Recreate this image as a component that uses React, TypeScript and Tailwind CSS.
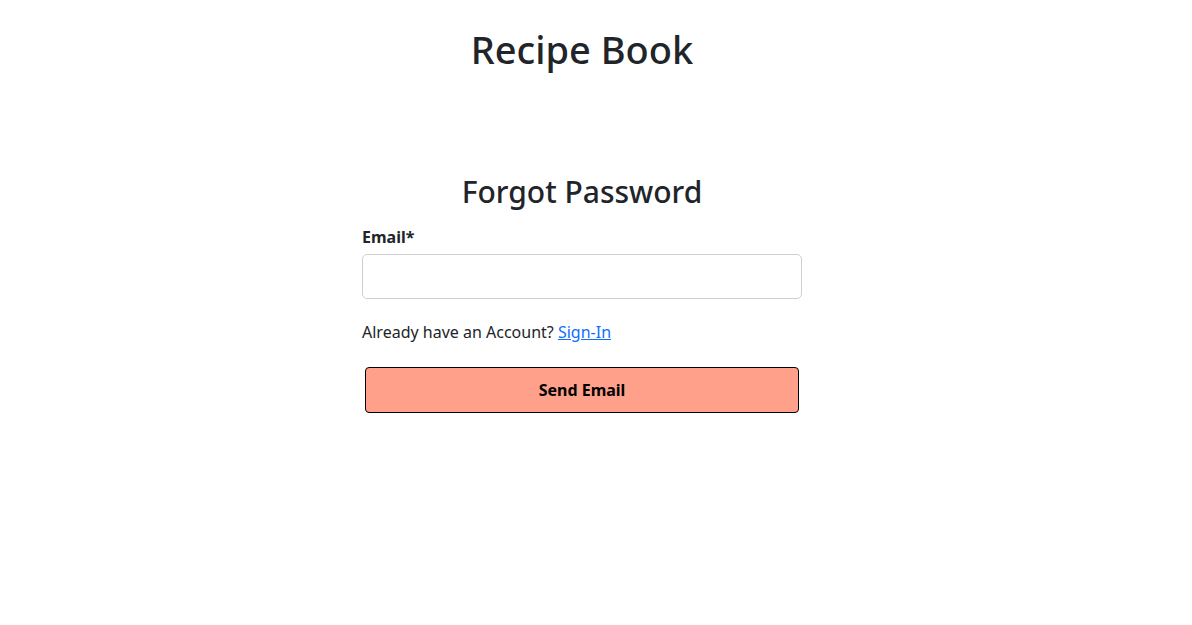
export default function App() {
  return (
    <div className="min-h-[625px] bg-white text-[#212529] font-['Noto_Sans',sans-serif]">
      <div className="w-[1164px] flex flex-col items-center">
        {/* Header */}
        <h1 className="mt-[25px] text-[38px] leading-[48px] font-medium">Recipe Book</h1>

        {/* Forgot password form */}
        <div className="mt-[100px] w-[440px] flex flex-col">
          <h2 className="text-center text-[30px] leading-[38px] font-medium">Forgot Password</h2>
          <label className="mt-[14px] text-[16px] leading-[24px] font-bold">Email*</label>
          <input
            type="email"
            className="mt-[5px] h-[45px] w-full rounded-[5px] border border-[#cfcfcf] px-3 outline-none"
          />
          <p className="mt-[21px] mb-[23px] text-[16px] leading-[24px]">
            Already have an Account?{" "}
            <a href="#" className="text-[#0d6efd] underline">
              Sign-In
            </a>
          </p>
          <button className="mx-[3px] h-[46px] rounded-[4px] border border-black bg-[#ffa08a] text-[16px] font-bold text-black">
            Send Email
          </button>
        </div>
      </div>
    </div>
  );
}
